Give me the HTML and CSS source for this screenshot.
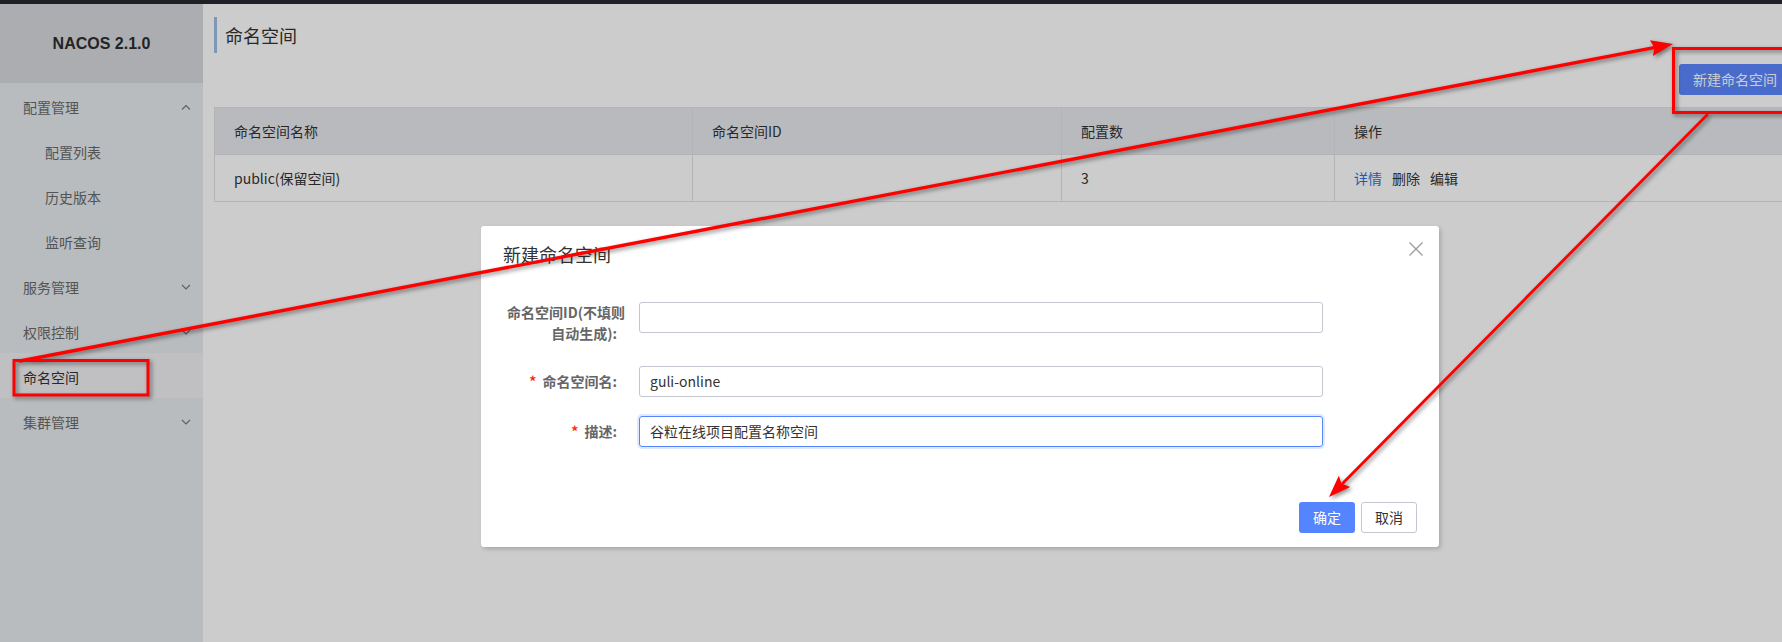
FILE: index.html
```html
<!DOCTYPE html>
<html lang="zh-CN">
<head>
<meta charset="utf-8">
<title>Nacos - 命名空间</title>
<link rel="stylesheet" href="styles.css">
</head>
<body>
<div class="topbar"></div>
<div class="app">
  <aside class="sidebar">
    <div class="logo">NACOS 2.1.0</div>
    <ul class="menu">
      <li class="menu-item"><span>配置管理</span>
        <svg class="chev" viewBox="0 0 10 6"><path d="M1 5.5 L5 1.5 L9 5.5" /></svg></li>
      <li class="menu-item sub"><span>配置列表</span></li>
      <li class="menu-item sub"><span>历史版本</span></li>
      <li class="menu-item sub"><span>监听查询</span></li>
      <li class="menu-item"><span>服务管理</span>
        <svg class="chev" viewBox="0 0 10 6"><path d="M1 1 L5 5 L9 1" /></svg></li>
      <li class="menu-item"><span>权限控制</span>
        <svg class="chev" viewBox="0 0 10 6"><path d="M1 1 L5 5 L9 1" /></svg></li>
      <li class="menu-item active"><span>命名空间</span></li>
      <li class="menu-item"><span>集群管理</span>
        <svg class="chev" viewBox="0 0 10 6"><path d="M1 1 L5 5 L9 1" /></svg></li>
    </ul>
  </aside>
  <main class="main">
    <h1 class="page-title">命名空间</h1>
    <div class="toolbar">
      <button class="btn btn-primary btn-new">新建命名空间</button>
    </div>
    <table class="ns-table">
      <colgroup>
        <col class="c1"><col class="c2"><col class="c3"><col class="c4">
      </colgroup>
      <thead>
        <tr><th>命名空间名称</th><th>命名空间ID</th><th>配置数</th><th>操作</th></tr>
      </thead>
      <tbody>
        <tr>
          <td>public(保留空间)</td>
          <td></td>
          <td>3</td>
          <td><span class="op link">详情</span><span class="op">删除</span><span class="op">编辑</span></td>
        </tr>
      </tbody>
    </table>
  </main>
</div>
<div class="mask"></div>

<div class="dialog">
  <div class="dialog-header">
    <span class="dialog-title">新建命名空间</span>
    <svg class="close" viewBox="0 0 14 14"><path d="M0.5 0.5 L13.5 13.5 M13.5 0.5 L0.5 13.5" /></svg>
  </div>
  <div class="dialog-body">
    <div class="form-row">
      <label class="form-label wrap">命名空间ID(不填则自动生成)</label>
      <div class="input"></div>
    </div>
    <div class="form-row">
      <label class="form-label"><span class="req">*</span>命名空间名</label>
      <div class="input">guli-online</div>
    </div>
    <div class="form-row">
      <label class="form-label"><span class="req">*</span>描述</label>
      <div class="input focused">谷粒在线项目配置名称空间</div>
    </div>
  </div>
  <div class="dialog-footer">
    <button class="btn btn-primary btn-ok">确定</button>
    <button class="btn btn-normal">取消</button>
  </div>
</div>

<svg class="annot" viewBox="0 0 1782 642" width="1782" height="642">
  <g class="marks">
    <rect x="14" y="360.5" width="134" height="34.5" />
    <rect x="1673.5" y="48.5" width="200" height="64" />
    <line x1="20" y1="361" x2="1654" y2="47.6" class="l1" />
    <polygon points="1673,44 1649.9,40.3 1654.5,47.7 1652.9,56" />
    <line x1="1707" y1="115" x2="1343" y2="483" class="l2" />
    <polygon points="1329,497 1350.2,487 1341.5,483.5 1338.8,475.8" />
  </g>
</svg>
</body>
</html>
```

FILE: styles.css
```css
* { box-sizing: border-box; }

html, body {
  margin: 0;
  padding: 0;
}

body {
  position: relative;
  width: 1782px;
  height: 642px;
  overflow: hidden;
  background: #fff;
  font-family: "Noto Sans CJK SC", "Noto Sans", sans-serif;
  font-size: 14px;
  color: #333;
}

.topbar {
  height: 4px;
  background: #282a30;
}

.app {
  display: flex;
  width: 1801px;
  height: 638px;
}

/* ---------- sidebar ---------- */
.sidebar {
  flex: none;
  width: 203px;
  background: #e7ebee;
}

.logo {
  height: 79px;
  display: flex;
  align-items: center;
  justify-content: center;
  background: #d7d9dd;
  font-family: "Liberation Sans", Arial, sans-serif;
  font-weight: bold;
  font-size: 16px;
  color: #2e2e2e;
}

.menu {
  list-style: none;
  margin: 0;
  padding: 0;
}

.menu-item {
  height: 45px;
  display: flex;
  align-items: center;
  justify-content: space-between;
  padding: 2px 12px 0 23px;
  color: #6a6a6a;
  font-size: 14px;
}

.menu-item.sub {
  padding-left: 45px;
}

.menu-item.active {
  background: #f1f1f4;
  color: #333;
}

.chev {
  width: 10px;
  height: 6px;
  fill: none;
  stroke: #777;
  stroke-width: 1.1;
}

/* ---------- main ---------- */
.main {
  flex: 1;
  padding: 13px 10px 0 11px;
}

.page-title {
  margin: 0;
  height: 36px;
  border-left: 3px solid #9bbfe4;
  padding-left: 8px;
  font-size: 18px;
  font-weight: normal;
  line-height: 36px;
  color: #333;
}

.toolbar {
  display: flex;
  justify-content: flex-end;
  margin-top: 11px;
}

.btn {
  height: 31px;
  border-radius: 3px;
  font-family: inherit;
  font-size: 14px;
  line-height: 29px;
  cursor: pointer;
  white-space: nowrap;
}

.btn-primary {
  border: 1px solid transparent;
  background: #5584ff;
  color: #fff;
}

.btn-new {
  background: #5c87ff;
  padding: 0 13px;
}

.ns-table {
  width: 100%;
  margin-top: 12px;
  border-collapse: collapse;
  table-layout: fixed;
  font-size: 14px;
  color: #333;
}

.ns-table .c1 { width: 478px; }
.ns-table .c2 { width: 369px; }
.ns-table .c3 { width: 273px; }

.ns-table th,
.ns-table td {
  border: 1px solid #e1e2e6;
  padding: 0 19px;
  text-align: left;
  font-weight: normal;
}

.ns-table th {
  height: 47px;
  background: #e8e9ed;
}

.ns-table td {
  height: 47px;
}

.op {
  margin-right: 10px;
}

.op.link {
  color: #2676dc;
}

/* ---------- overlay ---------- */
.mask {
  position: absolute;
  inset: 0;
  background: rgba(0, 0, 0, 0.2);
}

.dialog {
  position: absolute;
  left: 481px;
  top: 226px;
  width: 958px;
  height: 321px;
  display: flex;
  flex-direction: column;
  background: #fff;
  border-radius: 3px;
  box-shadow: 2px 2px 4px rgba(0, 0, 0, 0.18);
}

.dialog-header {
  display: flex;
  justify-content: space-between;
  align-items: flex-start;
  padding: 16px 16px 0 22px;
}

.dialog-title {
  font-size: 18px;
  line-height: 24px;
  color: #333;
}

.close {
  width: 14px;
  height: 14px;
  fill: none;
  stroke: #9a9a9a;
  stroke-width: 1.3;
}

.dialog-body {
  padding: 36px 20px 0 20px;
}

.form-row {
  display: flex;
  align-items: flex-start;
  gap: 14px;
  margin-bottom: 19px;
}

.form-label {
  flex: none;
  width: 124px;
  padding-top: 5px;
  text-align: right;
  font-size: 14px;
  font-weight: bold;
  line-height: 21px;
  color: #666;
}

.form-label::after {
  content: ":";
  margin: 0 8px 0 0;
}

.form-label.wrap {
  padding-top: 0;
  padding-bottom: 3px;
}

.req {
  color: #ff3000;
  margin-right: 6px;
  font-weight: bold;
}

.input {
  width: 684px;
  height: 31px;
  border: 1px solid #c4c6cf;
  border-radius: 3px;
  padding: 0 10px;
  font-size: 14px;
  line-height: 29px;
  color: #333;
}

.input.focused {
  border-color: #5584ff;
  box-shadow: 0 0 0 2px rgba(85, 132, 255, 0.18);
}

.dialog-footer {
  margin-top: auto;
  display: flex;
  justify-content: flex-end;
  gap: 6px;
  padding: 0 22px 14px 20px;
}

.btn-ok,
.btn-normal {
  width: 56px;
  padding: 0;
}

.btn-normal {
  border: 1px solid #c4c6cf;
  background: #fff;
  color: #333;
}

/* ---------- annotations ---------- */
.annot {
  position: absolute;
  left: 0;
  top: 0;
  pointer-events: none;
}

.marks {
  filter: drop-shadow(2px 2px 2px rgba(0, 0, 0, 0.45));
}

.marks rect {
  fill: none;
  stroke: #ff0000;
  stroke-width: 3;
}

.marks line {
  stroke: #ff0000;
  stroke-linecap: round;
}

.marks .l1 { stroke-width: 3.4; }
.marks .l2 { stroke-width: 2.8; }

.marks polygon {
  fill: #ff0000;
}
```
